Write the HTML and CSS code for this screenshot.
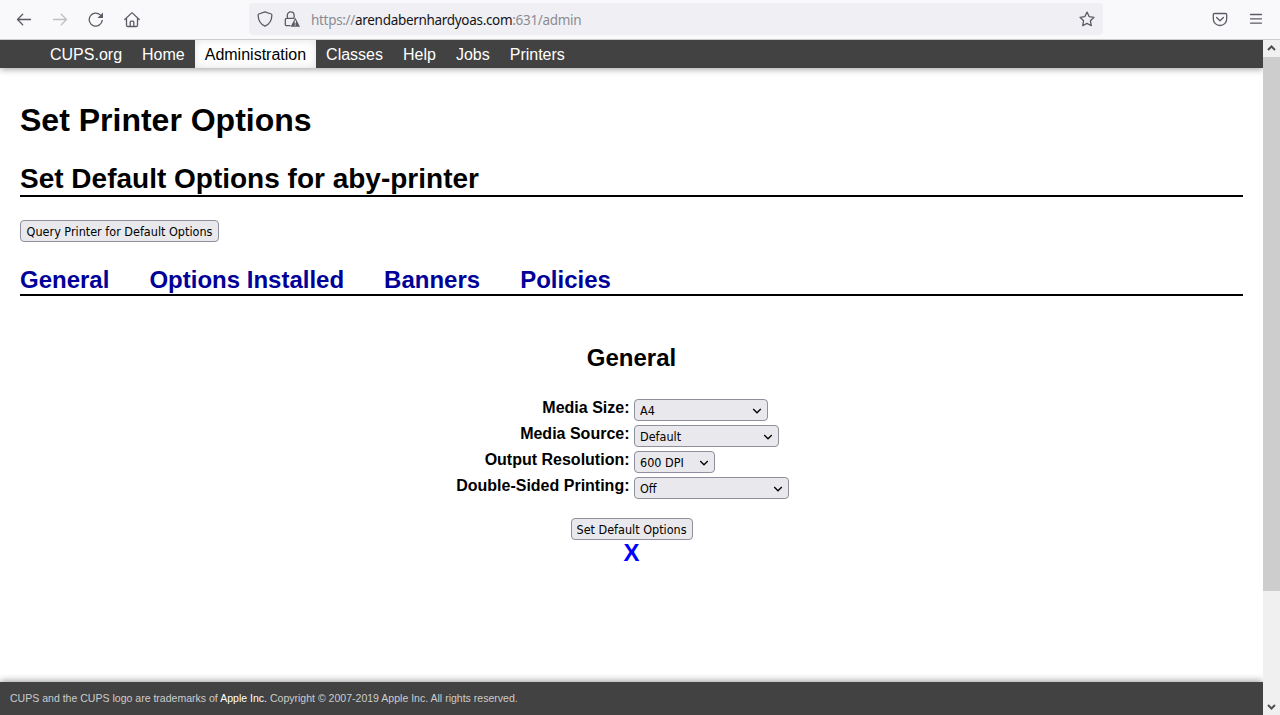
FILE: index.html
```html
<!DOCTYPE html>
<html lang="en">
<head>
<meta charset="utf-8">
<title>Set Printer Options</title>
<link rel="stylesheet" href="styles.css">
</head>
<body>
<div class="toolbar">
  <div class="nav-buttons">
    <svg class="icon" viewBox="0 0 16 16"><path d="M14.500 7.500H1.800M6.700 2.300 1.500 7.500 6.700 12.700"/></svg>
    <svg class="icon disabled" viewBox="0 0 16 16"><path d="M1.500 7.500h12.700M9.300 2.300 14.500 7.500 9.300 12.700"/></svg>
    <svg class="icon" viewBox="0 0 16 16"><path d="M14.200 8.400A6.500 6.500 0 1 1 12.200 2.900"/><path class="solid" d="M15 .6v5.500H9.500z"/></svg>
    <svg class="icon" viewBox="0 0 16 16"><path d="M.8 7.500 7.500 1.100q.5-.4 1 0l6.700 6.400M2.500 6.500v6.700q0 1.300 1.300 1.300h8.400q1.300 0 1.300-1.300V6.500M6.200 14.300V10.200q0-1 1-1h1.600q1 0 1 1v4.100"/></svg>
  </div>
  <div class="urlbar">
    <svg class="icon shield" viewBox="0 0 16 16"><path d="M8 .8 14.200 3q.7.3.7 1C14.800 9.500 12 13.400 8 15.200 4 13.400 1.200 9.500 1.100 4q0-.7.7-1z"/></svg>
    <svg class="icon lock" viewBox="0 0 16 16"><path d="M6 14.700H2.700Q1.300 14.700 1.300 13.300V8.700Q1.300 7.300 2.700 7.300h6.900M3.300 7V4.300a3.400 3.400 0 0 1 6.800 0V7"/><path class="solid" d="m11.300 6.800 4.700 9H6.600z"/><path class="mark" d="M11.300 9.500v3M11.300 13.400v1.200"/></svg>
    <span class="url">https://<b>arendabernhardyoas.com</b>:631/admin</span>
    <svg class="icon star" viewBox="0 0 16 16"><path d="m8 1.100 2.100 4.500 4.900.7-3.600 3.400.9 5L8 12.400l-4.300 2.300.9-5L1 6.300l4.900-.7z"/></svg>
  </div>
  <div class="tools">
    <svg class="icon" viewBox="0 0 16 16"><path d="M2.600 1.500h10.800q1.300 0 1.300 1.300v4.200a6.700 6.500 0 0 1-13.400 0V2.800Q1.300 1.500 2.600 1.500zM4.600 5.500 8 8.700 11.400 5.500"/></svg>
    <svg class="icon" viewBox="0 0 16 16"><path d="M2.500 2.500h11M2.500 6.800h11M2.500 11.100h11"/></svg>
  </div>
</div>
<div class="viewport">
  <div class="page">
    <nav class="menu">
      <a>CUPS.org</a><a>Home</a><a class="active">Administration</a><a>Classes</a><a>Help</a><a>Jobs</a><a>Printers</a>
    </nav>
    <main class="body">
      <h1>Set Printer Options</h1>
      <h2 class="title">Set Default Options for aby-printer</h2>
      <button class="control query">Query Printer for Default Options</button>
      <div class="tabs"><a>General</a><a>Options Installed</a><a>Banners</a><a>Policies</a></div>
      <h3>General</h3>
      <div class="options">
        <label>Media Size:</label><div class="control select size"><span>A4</span><svg viewBox="0 0 10 6"><path d="m1.200 1 3.800 3.800L8.800 1"/></svg></div>
        <label>Media Source:</label><div class="control select source"><span>Default</span><svg viewBox="0 0 10 6"><path d="m1.200 1 3.800 3.800L8.800 1"/></svg></div>
        <label>Output Resolution:</label><div class="control select resolution"><span>600 DPI</span><svg viewBox="0 0 10 6"><path d="m1.200 1 3.800 3.800L8.800 1"/></svg></div>
        <label>Double-Sided Printing:</label><div class="control select duplex"><span>Off</span><svg viewBox="0 0 10 6"><path d="m1.200 1 3.800 3.800L8.800 1"/></svg></div>
      </div>
      <button class="control submit">Set Default Options</button>
      <a class="close">X</a>
    </main>
    <footer class="footer">CUPS and the CUPS logo are trademarks of <a>Apple Inc.</a> Copyright © 2007-2019 Apple Inc. All rights reserved.</footer>
  </div>
  <div class="scrollbar">
    <svg viewBox="0 0 17 17"><path d="m5 10 3.500-3.500L12 10"/></svg>
    <div class="thumb"></div>
    <svg viewBox="0 0 17 17"><path d="M5 7l3.500 3.500L12 7"/></svg>
  </div>
</div>
</body>
</html>
```
FILE: styles.css
```css
* { box-sizing: border-box; }
body {
  margin: 0;
  height: 715px;
  overflow: hidden;
  display: flex;
  flex-direction: column;
  background: #fff;
  color: #000;
  font-family: "Liberation Sans", Arial, sans-serif;
}
.toolbar {
  height: 40px;
  flex: none;
  display: flex;
  background: #f9f9fb;
  border-bottom: 1px solid #ccc;
}
.icon {
  width: 16px;
  height: 16px;
  flex: none;
  fill: none;
  stroke: #5b5b66;
  stroke-width: 1.3;
  stroke-linejoin: round;
  stroke-linecap: round;
}
.icon .solid { fill: #5b5b66; stroke: none; }
.icon .mark { stroke: #f0f0f4; stroke-width: 1.2; stroke-linecap: butt; }
.icon.disabled { stroke: #bebec3; }
.nav-buttons {
  width: 249px;
  display: flex;
  align-items: center;
  gap: 20px;
  padding-left: 16px;
}
.urlbar {
  width: 854px;
  height: 32px;
  margin-top: 3px;
  padding: 0 8px;
  display: flex;
  align-items: center;
  border-radius: 4px;
  background: #f0f0f4;
}
.lock { margin-left: 11px; }
.url {
  margin-left: 11px;
  padding-top: 2px;
  font: 13.5px/20px "Noto Sans", "Open Sans", sans-serif;
  letter-spacing: -0.31px;
  color: #8b8b92;
  white-space: nowrap;
}
.url b { font-weight: 400; color: #15141a; }
.star { margin-left: auto; }
.tools {
  flex: 1;
  display: flex;
  align-items: center;
  justify-content: flex-end;
  gap: 20px;
  padding-right: 16px;
}
.viewport { flex: 1; display: flex; min-height: 0; overflow: hidden; }
.page { width: 1263px; display: flex; flex-direction: column; }
.menu {
  height: 28px;
  flex: none;
  display: flex;
  padding-left: 40px;
  background: #424242;
  box-shadow: 0 1px 7px rgba(0, 0, 0, .4);
}
.menu a { padding: 5px 10px; font-size: 16px; line-height: 19px; color: #fff; }
.menu .active {
  background: #fff;
  color: #000;
  box-shadow: inset 0 0 8px rgba(0, 0, 0, .12);
}
.body {
  flex: 1;
  padding: 0 20px;
  display: flex;
  flex-direction: column;
}
h1 { margin: 34px 0 0; font-size: 32px; line-height: 36px; }
.title {
  margin: 24px 0 0;
  font-size: 28px;
  line-height: 33px;
  border-bottom: 2px solid #000;
}
.control {
  height: 22px;
  border: 1px solid #8f8f9d;
  border-radius: 4px;
  background: #e9e9ed;
  color: #000;
  font: 12.5px/19px "DejaVu Sans Condensed", "DejaVu Sans", sans-serif;
  font-stretch: condensed;
  padding: 1px 5px 0;
  white-space: nowrap;
}
.query { width: 199px; margin-top: 23px; }
.tabs {
  margin-top: 24px;
  height: 30px;
  display: flex;
  gap: 40px;
  border-bottom: 2px solid #000;
  font-size: 24px;
  line-height: 28px;
  font-weight: 700;
  color: #009;
}
h3 { margin: 48px 0 0; font-size: 24px; line-height: 28px; text-align: center; }
.options {
  margin-top: 27px;
  display: grid;
  grid-template-columns: 609.5px 1fr;
  column-gap: 4.5px;
  row-gap: 4px;
}
.options label {
  text-align: right;
  font-size: 16px;
  line-height: 18px;
  font-weight: 700;
}
.select { display: flex; align-items: center; justify-content: space-between; }
.select svg {
  width: 10px;
  height: 6px;
  fill: none;
  stroke: #000;
  stroke-width: 1.3;
}
.size { width: 134px; }
.source { width: 145px; }
.resolution { width: 81px; }
.duplex { width: 155px; }
.submit { width: 122px; margin-top: 19px; align-self: center; }
.close {
  align-self: center;
  font-size: 24px;
  line-height: 25px;
  font-weight: 700;
  color: #00f;
}
.footer {
  height: 33px;
  padding: 10px;
  background: #424242;
  color: #ccc;
  font-size: 10.54px;
  line-height: 13px;
  box-shadow: 0 -1px 7px rgba(0, 0, 0, .4);
}
.footer a { color: #fff; }
.scrollbar {
  width: 17px;
  display: flex;
  flex-direction: column;
  background: #f0f0f0;
  position: relative;
}
.scrollbar svg {
  width: 17px;
  height: 17px;
  fill: none;
  stroke: #505050;
  stroke-width: 2;
}
.thumb { height: 534px; margin-bottom: auto; background: #cdcdcd; }
```
